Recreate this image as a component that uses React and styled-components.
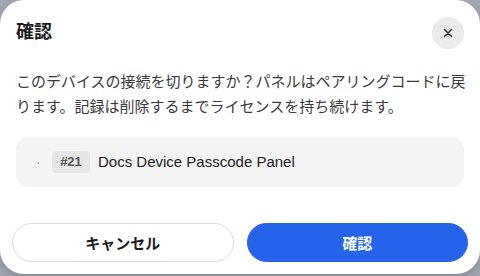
import React from "react";
import styled, { createGlobalStyle } from "styled-components";

const Global = createGlobalStyle`
    html, body {
        margin: 0;
        padding: 0;
        background: #a7abb5;
    }
    body {
        font-family: "Liberation Sans", "Noto Sans CJK JP", sans-serif;
        -webkit-font-smoothing: antialiased;
    }
`;

function App() {
    return (
        <Page>
            <Global />
            <Card>
                <Header>
                    <Title>確認</Title>
                    <CloseButton aria-label="閉じる">
                        <svg width="14" height="14" viewBox="0 0 14 14">
                            <path
                                d="M3.5 3.5 L10.5 10.5 M10.5 3.5 L3.5 10.5"
                                stroke="#333"
                                strokeWidth="1.5"
                                strokeLinecap="round"
                            />
                        </svg>
                    </CloseButton>
                </Header>
                <Message>
                    このデバイスの接続を切りますか？パネルはペアリングコードに戻ります。記録は削除するまでライセンスを持ち続けます。
                </Message>
                <ItemBox>
                    <Bullet>·</Bullet>
                    <Badge>#21</Badge>
                    <ItemName>Docs Device Passcode Panel</ItemName>
                </ItemBox>
                <Footer>
                    <Button>キャンセル</Button>
                    <Button primary>確認</Button>
                </Footer>
            </Card>
        </Page>
    );
}

export default App;

const Page = styled.div`
    width: 480px;
    height: 276px;
    overflow: hidden;
`;
const Card = styled.div`
    box-sizing: border-box;
    width: 480px;
    height: 274px;
    background: #fff;
    border-radius: 24px;
    box-shadow: 0 4px 14px rgba(20, 24, 36, 0.25);
    padding: 17px 16px 12px;
    display: flex;
    flex-direction: column;
`;
const Header = styled.div`
    display: flex;
    justify-content: space-between;
    align-items: flex-start;
    height: 32px;
`;
const Title = styled.h2`
    margin: 0;
    font-size: 18px;
    font-weight: 700;
    line-height: 26px;
    color: #1c1c1e;
    font-family: "Noto Sans CJK JP", sans-serif;
`;
const CloseButton = styled.button`
    width: 32px;
    height: 32px;
    border: none;
    border-radius: 50%;
    background: #ebebeb;
    display: flex;
    align-items: center;
    justify-content: center;
    padding: 0;
`;
const Message = styled.p`
    margin: 20px -6px 0 0;
    font-size: 15px;
    line-height: 24.75px;
    color: #3a3a3c;
    font-family: "Noto Sans CJK JP", sans-serif;
`;
const ItemBox = styled.div`
    margin-top: 18px;
    height: 50px;
    box-sizing: border-box;
    background: #f4f4f5;
    border-radius: 12px;
    padding: 0 20px;
    display: flex;
    align-items: center;
`;
const Bullet = styled.span`
    color: #999;
    font-size: 14px;
    width: 16px;
`;
const Badge = styled.span`
    display: inline-flex;
    align-items: center;
    justify-content: center;
    height: 22px;
    width: 38px;
    border-radius: 4px;
    background: #e6e6e7;
    color: #555;
    font-size: 13px;
    font-weight: 700;
    margin-right: 8px;
`;
const ItemName = styled.span`
    font-size: 15px;
    color: #222;
`;
const Footer = styled.div`
    margin: auto -4px 0;
    display: grid;
    grid-template-columns: 1fr 1fr;
    gap: 13px;
`;
const Button = styled.button`
    height: 39px;
    border-radius: 999px;
    border: 1px solid ${(p) => (p.primary ? "#2563eb" : "#dcdcdc")};
    background: ${(p) => (p.primary ? "#2563eb" : "#fff")};
    color: ${(p) => (p.primary ? "#fff" : "#1c1c1e")};
    font-size: 15px;
    font-weight: 700;
    font-family: "Noto Sans CJK JP", sans-serif;
`;
